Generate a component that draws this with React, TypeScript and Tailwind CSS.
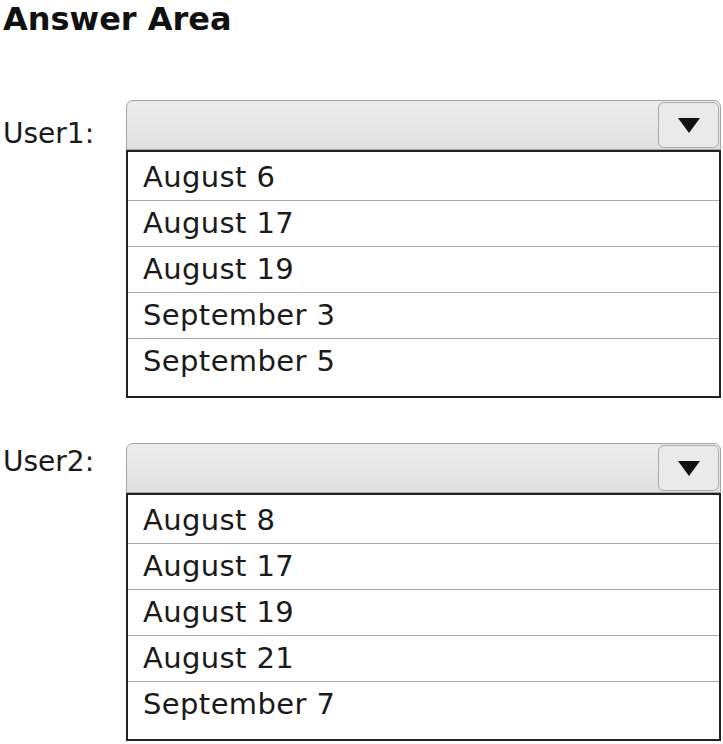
import React from 'react';

const font = { fontFamily: '"DejaVu Sans", Verdana, sans-serif' };

type Props = { label: string; items: string[]; labelPad: string };

const DropBlock: React.FC<Props> = ({ label, items, labelPad }) => {
  return (
    <div className="flex">
      {/* Label */}
      <div className={`w-[123px] shrink-0 ${labelPad} text-[28px] leading-[34px] text-[#1a1a1a]`}>{label}</div>

      <div className="w-[595px] flex flex-col">
        {/* Select box */}
        <div className="h-[50px] flex rounded-t-[7px] border border-[#a4a4a4] bg-gradient-to-b from-[#ededed] to-[#e0e0e0]">
          <div className="flex-1" />
          <div className="w-[61px] m-[1px] rounded-[6px] border border-[#ababab] bg-[#eaeaea] flex items-center justify-center">
            <svg width="24" height="17" viewBox="0 0 24 17">
              <path d="M1 1 L23 1 L12 16 Z" fill="#111" />
            </svg>
          </div>
        </div>

        {/* Options */}
        <div className="border-2 border-[#222] bg-white pt-[3px] pb-[11px]">
          {items.map((item, i) => (
            <div
              key={item}
              className={`h-[46px] pl-[15px] flex items-center text-[29px] tracking-[0.4px] text-[#1a1a1a] ${
                i < items.length - 1 ? 'border-b border-[#a8a8a8]' : ''
              }`}
            >
              {item}
            </div>
          ))}
        </div>
      </div>
    </div>
  );
};

export default function App() {
  return (
    <div className="w-[723px] h-[744px] bg-white pl-[3px] pt-[1px] overflow-hidden" style={font}>
      <h1 className="text-[32px] leading-[36px] font-bold text-[#111]">Answer Area</h1>
      <div className="mt-[63px]">
        <DropBlock
          label="User1:"
          labelPad="pt-[17px]"
          items={['August 6', 'August 17', 'August 19', 'September 3', 'September 5']}
        />
      </div>
      <div className="mt-[45px]">
        <DropBlock
          label="User2:"
          labelPad="pt-[2px]"
          items={['August 8', 'August 17', 'August 19', 'August 21', 'September 7']}
        />
      </div>
    </div>
  );
}
